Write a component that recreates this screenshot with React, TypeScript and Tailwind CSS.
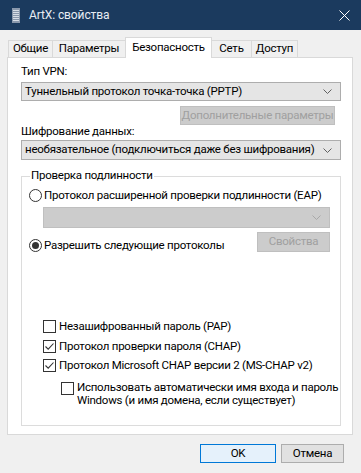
import { ReactNode } from "react"

type TabProps = {
    label: string
    width: string
    active?: boolean
}

function Tab({ label, width, active }: TabProps) {
    if (active) {
        return (
            <div className={`${width} h-[21px] -mb-px relative z-10 bg-white border-x border-t border-[#d9d9d9] flex items-start justify-center pt-[1px]`}>
                {label}
            </div>
        )
    }
    return (
        <div className={`${width} h-[17px] bg-[#f0f0f0] border-t border-x border-[#d9d9d9] -ml-px first:ml-0 flex items-center justify-center`}>
            {label}
        </div>
    )
}

function Chevron({ color = "#606060" }: { color?: string }) {
    return (
        <svg width="9" height="5" viewBox="0 0 9 5" className="shrink-0">
            <path d="M0.5 0.5 L4.5 4.5 L8.5 0.5" fill="none" stroke={color} strokeWidth="1" />
        </svg>
    )
}

function Combo({ text, h }: { text: string; h: string }) {
    return (
        <div className={`w-full ${h} bg-[#e5e5e5] border border-[#adadad] flex items-center justify-between pl-[3px] pr-[8px]`}>
            <span>{text}</span>
            <Chevron />
        </div>
    )
}

function Radio({ checked, children }: { checked?: boolean; children: ReactNode }) {
    return (
        <div className="flex items-center gap-[2px] leading-[15px]">
            <span className="w-[13px] h-[13px] shrink-0 rounded-full border border-[#333333] bg-white flex items-center justify-center">
                {checked && <span className="w-[7px] h-[7px] rounded-full bg-[#333333]" />}
            </span>
            <span>{children}</span>
        </div>
    )
}

function CheckBox({ checked }: { checked?: boolean }) {
    return (
        <span className="w-[13px] h-[13px] shrink-0 border border-[#333333] bg-white flex items-center justify-center">
            {checked && (
                <svg width="11" height="11" viewBox="0 0 11 11">
                    <path d="M1.5 5.5 L4.2 8.2 L9.5 2.5" fill="none" stroke="#333333" strokeWidth="1.1" />
                </svg>
            )}
        </span>
    )
}

function Check({ checked, children }: { checked?: boolean; children: ReactNode }) {
    return (
        <div className="flex items-center gap-[3px] leading-[15px]">
            <CheckBox checked={checked} />
            <span>{children}</span>
        </div>
    )
}

export default function App() {
    return (
        <div className="w-[361px] h-[473px] bg-[#f0f0f0] flex flex-col font-['Roboto',sans-serif] text-[11.5px] tracking-[-0.25px] text-black whitespace-nowrap overflow-hidden">

            {/* title bar */}
            <div className="h-[30px] bg-[#1b3a5e] flex items-center pl-[12px] pr-[11px] shrink-0">
                <svg width="8" height="15" viewBox="0 0 8 15" className="shrink-0">
                    <rect x="0" y="0" width="8" height="15" fill="#8a98ac" />
                    <rect x="1" y="2" width="6" height="1" fill="#d7dde6" />
                    <rect x="1" y="4" width="6" height="1" fill="#d7dde6" />
                    <rect x="1" y="6" width="6" height="1" fill="#d7dde6" />
                    <rect x="1" y="8" width="6" height="1" fill="#d7dde6" />
                    <rect x="1" y="10" width="6" height="1" fill="#d7dde6" />
                    <rect x="1" y="12" width="6" height="1" fill="#d7dde6" />
                </svg>
                <span className="ml-[9px] text-[12px] tracking-[-0.1px] text-[#e8edf3]">ArtX: свойства</span>
                <svg width="11" height="11" viewBox="0 0 11 11" className="ml-auto">
                    <path d="M0.5 0.5 L10.5 10.5 M10.5 0.5 L0.5 10.5" stroke="#ffffff" strokeWidth="1" />
                </svg>
            </div>

            {/* tabs + page */}
            <div className="px-[7px] pt-[7px] flex flex-col">
                <div className="flex items-end h-[20px]">
                    <div className="flex items-end pl-[1px]">
                        <Tab label="Общие" width="w-[45px]" />
                        <Tab label="Параметры" width="w-[74px]" />
                    </div>
                    <div className="-ml-px">
                        <Tab label="Безопасность" width="w-[87px]" active />
                    </div>
                    <div className="flex items-end -ml-px">
                        <Tab label="Сеть" width="w-[41px]" />
                        <Tab label="Доступ" width="w-[47px]" />
                    </div>
                </div>

                <div className="w-[346px] h-[378px] bg-white border border-[#d9d9d9] pl-[13px] pr-[11px] pt-[6px] flex flex-col">
                    <div className="leading-[15px]">Тип VPN:</div>
                    <div className="mt-[3px]">
                        <Combo text="Туннельный протокол точка-точка (PPTP)" h="h-[19px]" />
                    </div>
                    <div className="mt-[5px] flex justify-end pr-[6px]">
                        <div className="w-[155px] h-[19px] bg-[#cccccc] border border-[#bfbfbf] text-[#a0a0a0] flex items-center justify-center">
                            Дополнительные параметры
                        </div>
                    </div>
                    <div className="-mt-px leading-[15px]">Шифрование данных:</div>
                    <div className="mt-[1px]">
                        <Combo text="необязательное (подключиться даже без шифрования)" h="h-[20px]" />
                    </div>

                    {/* group box */}
                    <div className="mt-[16px] h-[250px] border border-[#dcdcdc] relative flex flex-col pl-[7px] pr-[10px] pt-[11px]">
                        <span className="absolute -top-[9px] left-[8px] bg-white px-[1px] leading-[15px]">Проверка подлинности</span>
                        <Radio>Протокол расширенной проверки подлинности (EAP)</Radio>
                        <div className="mt-[4px] ml-[14px] h-[21px] bg-[#cccccc] border border-[#bfbfbf] flex items-center justify-end pr-[8px]">
                            <Chevron color="#a8a8a8" />
                        </div>
                        <div className="mt-[4px] h-[20px] flex justify-between">
                            <div className="mt-[6px]">
                                <Radio checked>Разрешить следующие протоколы</Radio>
                            </div>
                            <div className="w-[73px] h-[20px] bg-[#cccccc] border border-[#bfbfbf] text-[#a0a0a0] flex items-center justify-center">
                                Свойства
                            </div>
                        </div>

                        <div className="mt-[67px] pl-[14px] flex flex-col gap-[4.5px]">
                            <Check>Незашифрованный пароль (PAP)</Check>
                            <Check checked>Протокол проверки пароля (CHAP)</Check>
                            <Check checked>Протокол Microsoft CHAP версии 2 (MS-CHAP v2)</Check>
                        </div>
                        <div className="mt-[8px] pl-[32px] flex items-start gap-[3px] leading-[13px]">
                            <span className="mt-[1px]"><CheckBox /></span>
                            <span>Использовать автоматически имя входа и пароль<br />Windows (и имя домена, если существует)</span>
                        </div>
                    </div>
                </div>
            </div>

            {/* dialog buttons */}
            <div className="mt-[9px] flex justify-end gap-[5px] pr-[17px]">
                <div className="w-[76px] h-[19px] bg-[#e5f1fb] border border-[#0078d7] flex items-center justify-center">OK</div>
                <div className="w-[63px] h-[19px] bg-[#e1e1e1] border border-[#adadad] flex items-center justify-center">Отмена</div>
            </div>
        </div>
    )
}
